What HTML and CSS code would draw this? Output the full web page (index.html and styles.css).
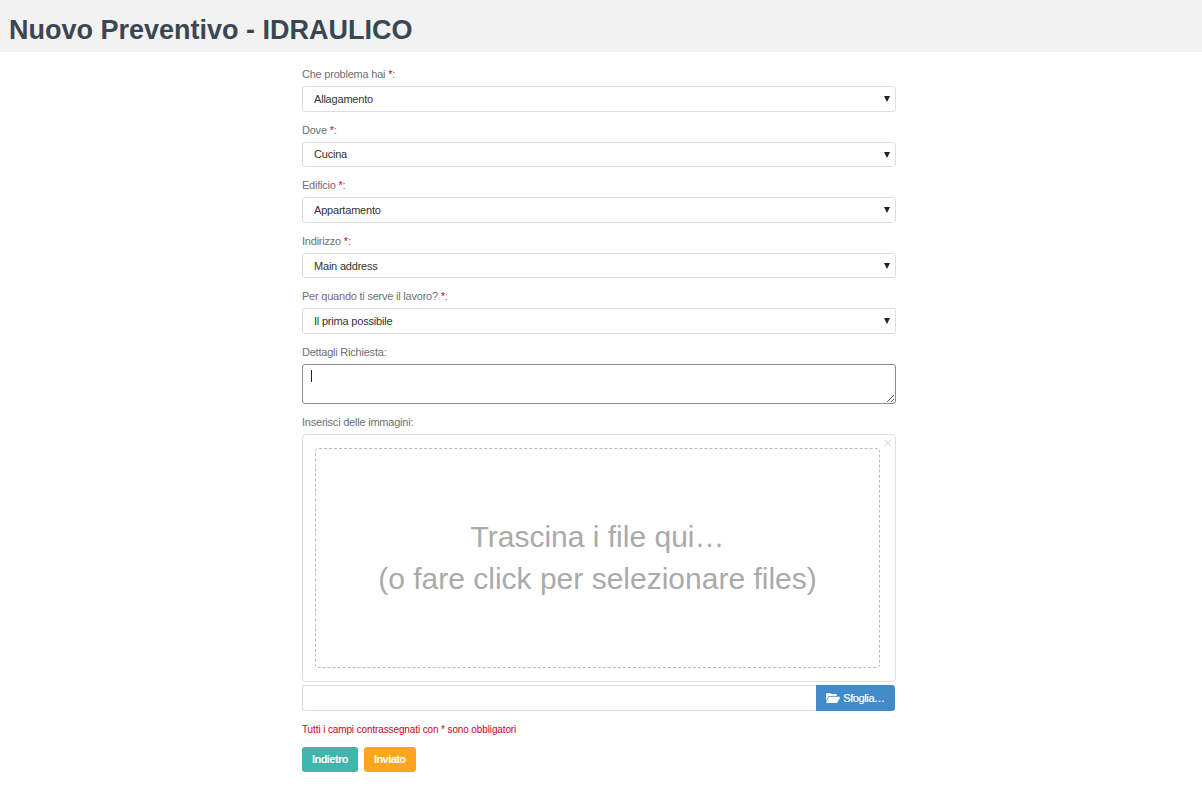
FILE: index.html
```html
<!DOCTYPE html>
<html lang="it">
<head>
  <meta charset="UTF-8">
  <meta name="viewport" content="width=device-width, initial-scale=1.0">
  <title>Nuovo Preventivo - IDRAULICO</title>
  <link rel="stylesheet" href="styles.css">
</head>
<body>
  <header class="page-header">
    <h1>Nuovo Preventivo - IDRAULICO</h1>
  </header>

  <form class="quote-form">
    <div class="form-group">
      <label>Che problema hai <span class="req">*</span>:</label>
      <div class="select-wrap">
        <select><option>Allagamento</option></select>
        <span class="arrow"></span>
      </div>
    </div>

    <div class="form-group">
      <label>Dove <span class="req">*</span>:</label>
      <div class="select-wrap">
        <select><option>Cucina</option></select>
        <span class="arrow"></span>
      </div>
    </div>

    <div class="form-group">
      <label>Edificio <span class="req">*</span>:</label>
      <div class="select-wrap">
        <select><option>Appartamento</option></select>
        <span class="arrow"></span>
      </div>
    </div>

    <div class="form-group">
      <label>Indirizzo <span class="req">*</span>:</label>
      <div class="select-wrap">
        <select><option>Main address</option></select>
        <span class="arrow"></span>
      </div>
    </div>

    <div class="form-group">
      <label>Per quando ti serve il lavoro? <span class="req">*</span>:</label>
      <div class="select-wrap">
        <select><option>Il prima possibile</option></select>
        <span class="arrow"></span>
      </div>
    </div>

    <div class="form-group">
      <label>Dettagli Richiesta:</label>
      <div class="textarea-wrap">
        <textarea></textarea>
        <span class="caret"></span>
      </div>
    </div>

    <div class="upload-group">
      <label>Inserisci delle immagini:</label>
      <div class="file-preview">
        <span class="close">×</span>
        <div class="drop-zone">
          <p>Trascina i file qui…</p>
          <p>(o fare click per selezionare files)</p>
        </div>
      </div>
      <div class="file-row">
        <div class="file-caption"></div>
        <button type="button" class="btn-browse">
          <svg class="folder" viewBox="0 0 16 13" width="14" height="12">
            <path fill="#fff" d="M0 2.2C0 1.3.6.7 1.4.7h3c.8 0 1.2.6 1.4 1.2h5.4c.7 0 1.2.5 1.2 1.2v1.1H4.2c-.9 0-1.6.5-2 1.300L0 9.700z"/>
            <path fill="#fff" d="M4.300 5.100H15c.8 0 1.200.7.800 1.400l-2.500 4.900c-.3.6-.8.9-1.400.9H1.200c-.8 0-1.200-.7-.8-1.400l2.500-4.900c.3-.6.8-.9 1.400-.9z"/>
          </svg>
          Sfoglia…
        </button>
      </div>
    </div>

    <p class="note">Tutti i campi contrassegnati con * sono obbligatori</p>

    <div class="actions">
      <button type="button" class="btn btn-back">Indietro</button>
      <button type="button" class="btn btn-send">Inviato</button>
    </div>
  </form>
</body>
</html>
```

FILE: styles.css
```css
body {
  margin: 0;
  font-family: "Liberation Sans", Arial, sans-serif;
  font-size: 11px;
  color: #555;
  background: #fff;
}

.page-header {
  background-color: #f2f2f2;
  height: 52px;
  box-sizing: border-box;
  padding: 8px 0 0 9px;
  display: flex;
  align-items: center;
}

.page-header h1 {
  margin: 0;
  font-size: 27px;
  font-weight: bold;
  color: #3a4752;
}

.quote-form {
  width: 594px;
  margin: 13.94px 0 0 302px;
}

.form-group {
  margin-bottom: 9.72px;
}

label {
  display: block;
  line-height: 17.14px;
  margin-bottom: 3px;
  color: #707070;
  letter-spacing: -0.22px;
}

.req {
  color: #d0021b;
}

.select-wrap,
.textarea-wrap {
  position: relative;
}

select {
  display: block;
  width: 100%;
  height: 25.71px;
  padding: 0 12px 0 11px;
  border: 1px solid #ddd;
  border-radius: 3px;
  background: #fff;
  color: #333;
  font-family: inherit;
  font-size: 11px;
  letter-spacing: -0.2px;
  appearance: none;
}

.arrow {
  position: absolute;
  right: 6px;
  top: 10px;
  border-left: 3.5px solid transparent;
  border-right: 3.5px solid transparent;
  border-top: 6px solid #222;
}

textarea {
  display: block;
  width: 100%;
  height: 40px;
  box-sizing: border-box;
  border: 1px solid #8c8c8c;
  border-radius: 3px;
  outline: none;
  padding: 4px 8px;
  font-family: inherit;
  font-size: 11px;
}

.caret {
  position: absolute;
  left: 9px;
  top: 6px;
  width: 1px;
  height: 12px;
  background: #222;
}

.file-preview {
  position: relative;
  height: 248px;
  box-sizing: border-box;
  border: 1px solid #ddd;
  border-radius: 4px;
  padding: 13px 15px 13px 12px;
}

.close {
  position: absolute;
  top: 0;
  right: 3px;
  font-size: 15px;
  line-height: 15px;
  color: #ddd;
}

.drop-zone {
  height: 100%;
  box-sizing: border-box;
  border: 1px dashed #bbb;
  border-radius: 4px;
  display: flex;
  flex-direction: column;
  justify-content: center;
  align-items: center;
  color: #aaa;
  font-size: 30px;
  line-height: 42px;
}

.drop-zone p {
  margin: 0;
}

.file-row {
  display: flex;
  height: 26px;
  margin-top: 3px;
  width: 593px;
}

.file-caption {
  flex: 1;
  border: 1px solid #ddd;
  border-right: none;
  border-radius: 3px 0 0 3px;
}

.btn-browse {
  width: 79px;
  border: none;
  border-radius: 0 3px 3px 0;
  background-color: #428bca;
  color: #fff;
  font-family: inherit;
  font-size: 11px;
  letter-spacing: -0.4px;
  -webkit-text-stroke: 0.2px #fff;
  padding: 0;
  display: flex;
  align-items: center;
  justify-content: center;
  gap: 3px;
}

.note {
  margin: 13px 0 0;
  color: #d0021b;
  font-size: 10px;
  letter-spacing: -0.12px;
  line-height: 12px;
}

.actions {
  display: flex;
  gap: 6px;
  margin-top: 11px;
}

.btn {
  height: 25px;
  padding: 0 10px;
  border: none;
  border-radius: 3px;
  color: #fff;
  font-family: inherit;
  font-size: 11px;
  font-weight: bold;
  letter-spacing: -0.55px;
}

.btn-back {
  background-color: #3fb5ad;
}

.btn-send {
  background-color: #fca61f;
}
```
